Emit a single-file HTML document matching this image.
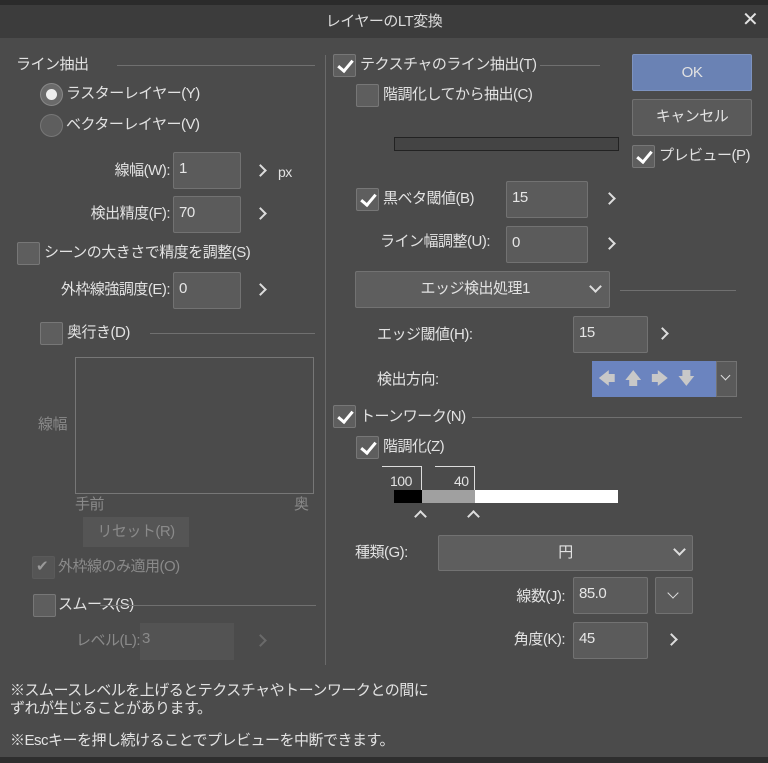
<!DOCTYPE html>
<html><head><meta charset="utf-8"><style>
*{margin:0;padding:0;box-sizing:border-box}
body{width:768px;height:763px;background:#4b4b4b;font-family:"Liberation Sans","Noto Sans CJK JP",sans-serif;font-size:15px;color:#e2e2e2;position:relative;overflow:hidden;letter-spacing:-0.5px}
.a{position:absolute;line-height:20px;white-space:nowrap}
.r{text-align:right}
.inp{position:absolute;background:#5b5b5b;border:1px solid #727272;border-radius:2px;padding:6px 5px;line-height:20px;color:#e6e6e6}
.cb{position:absolute;width:23px;height:23px;background:#5e5e5e;border:1px solid #777;border-radius:2px}
.cb.k::after{content:"";position:absolute;left:7px;top:2px;width:6px;height:12px;border:solid #fff;border-width:0 3px 3px 0;transform:rotate(40deg)}
.ln{position:absolute;height:1px;background:#707070}
.g{color:#8a8a8a}
.btn{position:absolute;background:#5a5a5a;border:1px solid #727272;border-radius:2px;text-align:center;line-height:34px}
.chev{position:absolute;width:9px;height:9px;border:solid #ddd;border-width:0 2px 2px 0;transform:rotate(45deg)}
.gt{position:absolute;width:9px;height:9px;border:solid #ddd;border-width:0 2px 2px 0;transform:rotate(-45deg)}
</style></head><body>
<div style="position:absolute;left:0;top:0;width:768px;height:5px;background:#2b2b2b"></div>
<div style="position:absolute;left:0;top:5px;width:768px;height:33px;background:#3c3c3c"></div>
<div class="a" style="left:0;width:768px;text-align:center;top:12px;color:#dcdcdc">レイヤーのLT変換</div>
<div class="a" style="left:742px;top:10px;font-size:20px">✕</div>

<!-- left -->
<div class="a" style="left:16px;top:55px">ライン抽出</div>
<div class="ln" style="left:117px;top:65px;width:198px"></div>
<div style="position:absolute;left:40px;top:83px;width:23px;height:23px;border-radius:50%;background:#6a6a6a;border:1px solid #888"></div>
<div style="position:absolute;left:46px;top:89px;width:11px;height:11px;border-radius:50%;background:#eee"></div>
<div class="a" style="left:66px;top:84px">ラスターレイヤー(Y)</div>
<div style="position:absolute;left:40px;top:114px;width:23px;height:23px;border-radius:50%;background:#5e5e5e;border:1px solid #777"></div>
<div class="a" style="left:66px;top:115px">ベクターレイヤー(V)</div>

<div class="a r" style="left:0;width:170px;top:161px">線幅(W):</div>
<div class="inp" style="left:173px;top:152px;width:68px;height:37px">1</div>
<div class="gt" style="left:256px;top:166px"></div>
<div class="a" style="left:278px;top:162px;font-size:14px">px</div>
<div class="a r" style="left:0;width:170px;top:204px">検出精度(F):</div>
<div class="inp" style="left:173px;top:196px;width:68px;height:37px">70</div>
<div class="gt" style="left:256px;top:209px"></div>
<div class="cb" style="left:17px;top:242px"></div>
<div class="a" style="left:44px;top:243px">シーンの大きさで精度を調整(S)</div>
<div class="a r" style="left:0;width:170px;top:280px">外枠線強調度(E):</div>
<div class="inp" style="left:173px;top:272px;width:68px;height:37px">0</div>
<div class="gt" style="left:256px;top:285px"></div>

<div class="cb" style="left:40px;top:322px"></div>
<div class="a" style="left:67px;top:323px">奥行き(D)</div>
<div class="ln" style="left:150px;top:333px;width:165px"></div>
<div style="position:absolute;left:75px;top:357px;width:239px;height:137px;border:1px solid #777"></div>
<div class="a g" style="left:38px;top:415px">線幅</div>
<div class="a g" style="left:75px;top:495px">手前</div>
<div class="a g" style="left:294px;top:495px">奥</div>
<div style="position:absolute;left:83px;top:517px;width:106px;height:30px;background:#555;line-height:30px;text-align:center;color:#8a8a8a">リセット(R)</div>
<div class="cb" style="left:32px;top:556px;background:#555;border-color:#5a5a5a"></div>
<div class="a g" style="left:36px;top:557px;color:#999">✔</div>
<div class="a g" style="left:58px;top:557px">外枠線のみ適用(O)</div>
<div class="cb" style="left:33px;top:594px"></div>
<div class="a" style="left:58px;top:595px">スムース(S)</div>
<div class="ln" style="left:100px;top:605px;width:216px"></div>
<div class="a r g" style="left:0;width:140px;top:631px">レベル(L):</div>
<div style="position:absolute;left:140px;top:623px;width:94px;height:37px;background:#535353;color:#8a8a8a;padding:6px 2px;line-height:20px">3</div>
<div class="gt" style="left:256px;top:636px;border-color:#6a6a6a"></div>
<div style="position:absolute;left:325px;top:55px;width:1px;height:610px;background:#6a6a6a"></div>

<!-- right -->
<div class="cb k" style="left:333px;top:54px"></div>
<div class="a" style="left:360px;top:55px">テクスチャのライン抽出(T)</div>
<div class="ln" style="left:540px;top:65px;width:60px"></div>
<div class="cb" style="left:356px;top:84px"></div>
<div class="a" style="left:383px;top:85px">階調化してから抽出(C)</div>
<div style="position:absolute;left:394px;top:137px;width:225px;height:14px;background:#444;border:1px solid #222"></div>
<div class="cb k" style="left:356px;top:188px"></div>
<div class="a" style="left:383px;top:189px">黒ベタ閾値(B)</div>
<div class="inp" style="left:506px;top:181px;width:82px;height:37px">15</div>
<div class="gt" style="left:605px;top:194px"></div>
<div class="a r" style="left:300px;width:190px;top:232px">ライン幅調整(U):</div>
<div class="inp" style="left:506px;top:226px;width:82px;height:37px">0</div>
<div class="gt" style="left:605px;top:239px"></div>
<div class="btn" style="left:355px;top:271px;width:255px;height:37px;background:#5e5e5e">&nbsp;&nbsp;&nbsp;&nbsp;&nbsp;&nbsp;エッジ検出処理1&nbsp;&nbsp;&nbsp;&nbsp;&nbsp;&nbsp;&nbsp;&nbsp;&nbsp;&nbsp;</div>
<div class="chev" style="left:591px;top:282px"></div>
<div class="ln" style="left:620px;top:290px;width:116px"></div>
<div class="a" style="left:377px;top:325px">エッジ閾値(H):</div>
<div class="inp" style="left:573px;top:316px;width:75px;height:37px">15</div>
<div class="gt" style="left:658px;top:329px"></div>
<div class="a" style="left:377px;top:370px">検出方向:</div>
<div style="position:absolute;left:592px;top:361px;width:124px;height:36px;background:#6b84bf;color:#c8c8c8;font-size:17px;line-height:36px;letter-spacing:9px;padding-left:6px">🡄🡅🡆🡇</div>
<div style="position:absolute;left:716px;top:361px;width:21px;height:36px;background:#5a5a5a;border:1px solid #737373"></div>
<div class="chev" style="left:722px;top:372px;width:7px;height:7px;border-width:0 1px 1px 0"></div>
<div class="cb k" style="left:333px;top:405px"></div>
<div class="a" style="left:360px;top:407px">トーンワーク(N)</div>
<div class="ln" style="left:472px;top:417px;width:270px"></div>
<div class="cb k" style="left:356px;top:436px"></div>
<div class="a" style="left:383px;top:437px">階調化(Z)</div>
<div class="ln" style="left:382px;top:466px;width:40px;background:#ddd"></div>
<div style="position:absolute;left:421px;top:466px;width:1px;height:24px;background:#ddd"></div>
<div class="a" style="left:390px;top:471px;font-size:14px">100</div>
<div class="ln" style="left:435px;top:466px;width:40px;background:#ddd"></div>
<div style="position:absolute;left:474px;top:466px;width:1px;height:24px;background:#ddd"></div>
<div class="a" style="left:454px;top:471px;font-size:14px">40</div>
<div style="position:absolute;left:394px;top:490px;width:28px;height:13px;background:#000"></div>
<div style="position:absolute;left:422px;top:490px;width:53px;height:13px;background:#a0a0a0"></div>
<div style="position:absolute;left:475px;top:490px;width:143px;height:13px;background:#fff"></div>
<div class="chev" style="left:416px;top:512px;transform:rotate(225deg)"></div>
<div class="chev" style="left:469px;top:512px;transform:rotate(225deg)"></div>
<div class="a" style="left:355px;top:543px">種類(G):</div>
<div class="btn" style="left:438px;top:535px;width:255px;height:36px;background:#5e5e5e">円</div>
<div class="chev" style="left:675px;top:545px"></div>
<div class="a r" style="left:400px;width:165px;top:587px">線数(J):</div>
<div class="inp" style="left:573px;top:577px;width:75px;height:37px">85.0</div>
<div class="btn" style="left:655px;top:577px;width:38px;height:37px"></div>
<div class="chev" style="left:669px;top:589px;width:8px;height:8px;border-width:0 1px 1px 0"></div>
<div class="a r" style="left:400px;width:165px;top:630px">角度(K):</div>
<div class="inp" style="left:573px;top:622px;width:75px;height:37px">45</div>
<div class="gt" style="left:667px;top:635px"></div>

<div style="position:absolute;left:632px;top:54px;width:120px;height:37px;background:#6a82b4;border:1px solid #7d93c0;border-radius:2px;text-align:center;line-height:35px">OK</div>
<div class="btn" style="left:632px;top:99px;width:120px;height:37px">キャンセル</div>
<div class="cb k" style="left:632px;top:145px"></div>
<div class="a" style="left:659px;top:146px">プレビュー(P)</div>

<div class="a" style="left:10px;top:681px">※スムースレベルを上げるとテクスチャやトーンワークとの間に</div>
<div class="a" style="left:10px;top:699px">ずれが生じることがあります。</div>
<div class="a" style="left:10px;top:731px">※Escキーを押し続けることでプレビューを中断できます。</div>
<div style="position:absolute;left:0;top:757px;width:768px;height:6px;background:#2e2e2e"></div>
</body></html>
